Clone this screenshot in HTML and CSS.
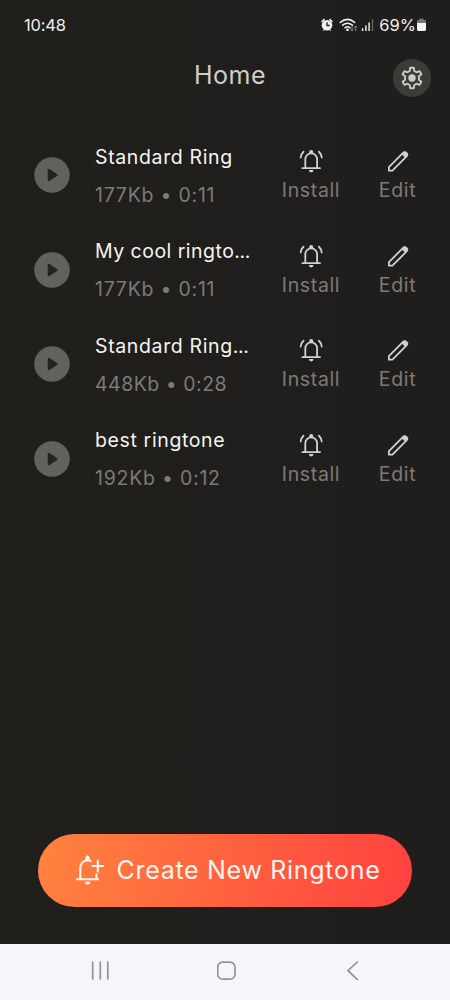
FILE: index.html
```
<!DOCTYPE html>
<html lang="en">
<head>
<meta charset="utf-8">
<title>Home</title>
<link rel="stylesheet" href="styles.css">
</head>
<body>
<svg class="defs" width="0" height="0">
  <symbol id="play" viewBox="0 0 36 36"><circle cx="18" cy="18" r="17.8" fill="#62615e"/><path d="M14.8 13v10.2l7.800-5.100z" fill="#24231f" stroke="#24231f" stroke-width="2.200" stroke-linejoin="round"/></symbol>
  <symbol id="bell" viewBox="0 0 24 24"><path d="M6.300 19V10.200a5.900 5.900 0 0 1 11.800 0V19M3.400 19.200h17.600M4.500 2.700Q2 4.900 1.700 8.500M19.900 2.700q2.500 2.200 2.800 5.800" fill="none" stroke="#d2d2ce" stroke-width="1.800" stroke-linecap="round"/><path d="M10.200 4.700V2.900a2 2 0 0 1 4 0V4.700zM9.900 21.100h4.600a2.300 2.300 0 0 1-4.600 0z" fill="#d2d2ce"/></symbol>
  <symbol id="pencil" viewBox="0 0 24 24"><path d="M2.900 21.700v-3.500L17.300 3.700a1.900 1.900 0 0 1 2.700 0l.8.800a1.900 1.900 0 0 1 0 2.700L6.400 21.700z" fill="none" stroke="#cfcfcb" stroke-width="1.800" stroke-linejoin="round"/><path d="m15.900 5.100 1.500-1.500a1.900 1.900 0 0 1 2.700 0l.8.800a1.900 1.900 0 0 1 0 2.700l-1.500 1.500z" fill="#cfcfcb" stroke="#cfcfcb"/></symbol>
</svg>
<div class="screen">
  <header class="status">
    <span class="clock">10:48</span>
    <svg class="status-icons" width="54" height="16" viewBox="0 0 54 16">
      <g fill="#f0f0ee"><circle cx="7" cy="8.3" r="5.3"/><path d="M1 4.400 3.800 1.600l1.300 1.200-2.900 2.800zM13 4.400l-2.800-2.800-1.300 1.200 2.900 2.800zM2.500 14l2-2.600h5l2 2.600-2.600-1H5.100z"/></g>
      <path d="M7 5.200v3.300h2.700" fill="none" stroke="#201f1b" stroke-width="1.300"/>
      <g fill="none" stroke="#f0f0ee" stroke-width="1.500" stroke-linecap="round"><path d="M20.300 5.400q7.200-6 14.400 0M22.600 8.200q4.900-4 9.800 0M25 10.800q2.500-2 5 0"/></g>
      <circle cx="27.500" cy="12.800" r="1.400" fill="#f0f0ee"/>
      <path d="M32 9v5m-1.300-1.500L32 14l1.300-1.500M35.700 14V9m-1.300 1.500L35.700 9l1.300 1.500" fill="none" stroke="#8a8986" stroke-width="1"/>
      <path d="M42.600 14v-2.800M45.900 14V8.600M49.100 14V5.500" stroke="#e9e9e6" stroke-width="1.500"/>
      <path d="M52.500 14V2.300" stroke="#696864" stroke-width="1.300"/>
    </svg>
    <span class="percent">69%</span>
    <svg class="battery" width="9" height="14" viewBox="0 0 9 14"><path d="M0 5V3.500Q0 2 2 1.700L3 .5h3l1 1.200q2 .3 2 1.800V5z" fill="#777672"/><path d="M0 5h9v6.500Q9 13 7.500 13h-6Q0 13 0 11.500z" fill="#f3f3f0"/></svg>
  </header>
  <div class="topbar">
    <h1>Home</h1>
    <button class="settings" aria-label="Settings">
      <svg width="26" height="26" viewBox="0 0 26 26"><path d="M11.200 2.800h3.600l.5 3.200 2.200 1.300 3.100-1.200 1.800 3.200-2.500 2v3.400l2.500 2-1.800 3.200-3.100-1.200-2.200 1.300-.5 3.200h-3.600l-.5-3.200-2.200-1.300-3.100 1.200-1.800-3.200 2.500-2v-3.400l-2.500-2 1.800-3.200 3.100 1.200L10.700 6z" fill="none" stroke="#cbcbc7" stroke-width="1.900" stroke-linejoin="round"/><circle cx="13" cy="13" r="3.700" fill="#cbcbc7"/></svg>
    </button>
  </div>
  <main class="list">
    <article class="row">
      <svg class="play"><use href="#play"/></svg>
      <div class="info"><div class="name">Standard Ring</div><div class="meta loose">177Kb • 0:11</div></div>
      <div class="action install"><svg class="icon"><use href="#bell"/></svg><span>Install</span></div>
      <div class="action edit"><svg class="icon"><use href="#pencil"/></svg><span>Edit</span></div>
    </article>
    <article class="row">
      <svg class="play"><use href="#play"/></svg>
      <div class="info"><div class="name snug">My cool ringto<span class="dots">...</span></div><div class="meta loose">177Kb • 0:11</div></div>
      <div class="action install"><svg class="icon"><use href="#bell"/></svg><span>Install</span></div>
      <div class="action edit"><svg class="icon"><use href="#pencil"/></svg><span>Edit</span></div>
    </article>
    <article class="row">
      <svg class="play"><use href="#play"/></svg>
      <div class="info"><div class="name">Standard Ring<span class="dots">...</span></div><div class="meta">448Kb • 0:28</div></div>
      <div class="action install"><svg class="icon"><use href="#bell"/></svg><span>Install</span></div>
      <div class="action edit"><svg class="icon"><use href="#pencil"/></svg><span>Edit</span></div>
    </article>
    <article class="row">
      <svg class="play"><use href="#play"/></svg>
      <div class="info"><div class="name">best ringtone</div><div class="meta loose">192Kb • 0:12</div></div>
      <div class="action install"><svg class="icon"><use href="#bell"/></svg><span>Install</span></div>
      <div class="action edit"><svg class="icon"><use href="#pencil"/></svg><span>Edit</span></div>
    </article>
  </main>
  <button class="create">
    <svg width="30" height="32" viewBox="0 0 30 32"><path d="M5.300 25V14.500Q5.300 7.300 12.300 6.300q1.900 0 3.300.8M2 25.200h21M21.400 24.500v-4.300M22.800 6.500v10.900M17.400 12h10.900" fill="none" stroke="#fff5ed" stroke-width="2.100" stroke-linecap="round"/><path d="M9.900 6.500 10.500 3a2 2 0 0 1 3.800 0l.9 3.500zM9.900 27.800h5.400a2.700 2.700 0 0 1-5.400 0z" fill="#fff5ed"/></svg>
    <span>Create New Ringtone</span>
  </button>
  <nav class="navbar">
    <svg width="20" height="20" viewBox="0 0 20 20"><path d="M1.700 1v17M9.300 1v17M16.800 1v17"/></svg>
    <svg width="20" height="20" viewBox="0 0 20 20"><rect x=".700" y="1.200" width="17.300" height="17" rx="5"/></svg>
    <svg width="20" height="20" viewBox="0 0 20 20"><path d="M14.200 1 5 9.700l9.200 8.700"/></svg>
  </nav>
</div>
</body>
</html>
```
FILE: styles.css
```
* { box-sizing: border-box; }
body { margin: 0; font-family: Inter, "Liberation Sans", sans-serif; background: #201f1c; }
.defs { display: block; height: 0; }
button { border: 0; padding: 0; font: inherit; }
.screen { width: 450px; height: 1000px; display: flex; flex-direction: column; background: linear-gradient(90deg, #201f1b, #201e1d); overflow: hidden; }
.status { display: flex; align-items: center; height: 50px; padding: 0 24px 0 24px; color: #f0f0ed; font-size: 16.500px; }
.clock { margin-right: auto; letter-spacing: -.200px; }
.status-icons { margin-right: 5px; }
.percent { letter-spacing: 0; }
.battery { margin-left: 1px; }
.topbar { height: 77.700px; display: grid; grid-template-columns: 70px 1fr 60px; align-items: start; }
.topbar h1 { grid-column: 2; margin: 10px 0 0; text-align: center; font-size: 25px; line-height: 30px; font-weight: 400; letter-spacing: .5px; color: #cececa; }
.settings { width: 38px; height: 38px; margin: 9px 0 0 3px; border-radius: 50%; background: #3c3b38; display: grid; place-items: center; }
.list { flex: 1; }
.row { height: 94.600px; padding-left: 34px; display: grid; grid-template-columns: 61px 173px 86px 87px; align-items: start; }
.play { width: 36px; height: 36px; margin-top: 29.500px; }
.info { padding-top: 10px; white-space: nowrap; line-height: 38px; }
.name { font-size: 19.500px; letter-spacing: .630px; color: #f5f5f2; }
.snug { letter-spacing: .480px; }
.dots { letter-spacing: -.400px; }
.meta { font-size: 19.500px; letter-spacing: .500px; color: #7c7b78; }
.loose { letter-spacing: .760px; }
.action { display: flex; flex-direction: column; align-items: center; padding-top: 21.300px; font-size: 19.500px; line-height: 28px; letter-spacing: .650px; color: #7c7b78; }
.icon { width: 24px; height: 24px; display: block; margin-bottom: 3px; }
.create { width: 374px; height: 73px; margin: 0 0 37px 38px; flex: none; border-radius: 37px; display: flex; align-items: center; padding-left: 37px; background: linear-gradient(100deg, #ff833e, #ff4140); color: #fff5ed; font-size: 25px; letter-spacing: .700px; white-space: nowrap; }
.create svg { margin-right: 11.500px; flex: none; }
.navbar { height: 56.500px; flex: none; display: flex; justify-content: space-between; padding: 17px 87px 0 91px; background: #f7f5f9; }
.navbar svg { fill: none; stroke: #929195; stroke-width: 1.700; stroke-linecap: round; }
```
